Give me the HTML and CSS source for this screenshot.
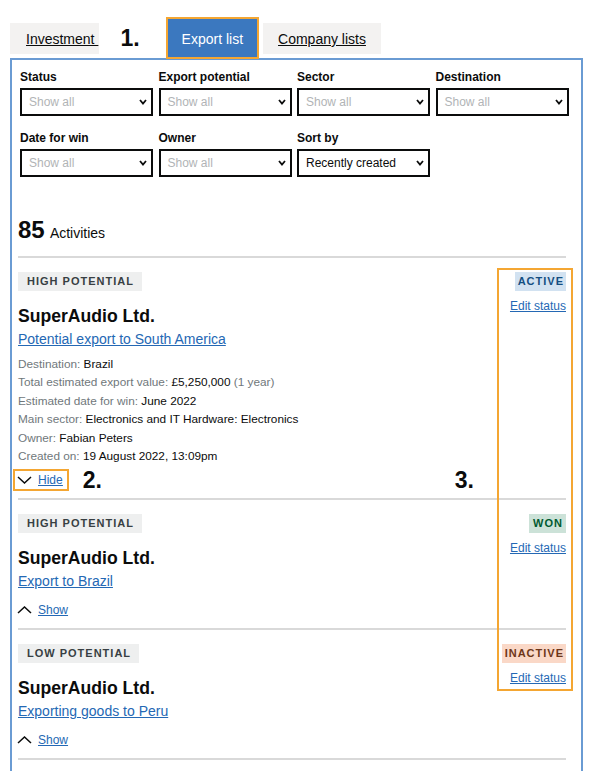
FILE: index.html
```html
<!DOCTYPE html>
<html lang="en">
<head>
<meta charset="utf-8">
<title>Export list</title>
<link rel="stylesheet" href="styles.css">
</head>
<body>
<nav class="tabs">
  <a class="tab tab-inactive tab-investment" href="#">Investment&nbsp;</a>
  <span class="annot-num annot-1">1.</span>
  <a class="tab tab-active" href="#">Export list</a>
  <a class="tab tab-inactive tab-company" href="#">Company lists</a>
</nav>
<main class="panel">
  <div class="filters">
    <div class="field">
      <span class="field-label">Status</span>
      <div class="select placeholder"><span>Show all</span><svg class="select-chev" width="8" height="6" viewBox="0 0 8 6"><polyline points="1,1 4,4.5 7,1" fill="none" stroke="#0b0c0c" stroke-width="1.8"/></svg></div>
    </div>
    <div class="field">
      <span class="field-label">Export potential</span>
      <div class="select placeholder"><span>Show all</span><svg class="select-chev" width="8" height="6" viewBox="0 0 8 6"><polyline points="1,1 4,4.5 7,1" fill="none" stroke="#0b0c0c" stroke-width="1.8"/></svg></div>
    </div>
    <div class="field">
      <span class="field-label">Sector</span>
      <div class="select placeholder"><span>Show all</span><svg class="select-chev" width="8" height="6" viewBox="0 0 8 6"><polyline points="1,1 4,4.5 7,1" fill="none" stroke="#0b0c0c" stroke-width="1.8"/></svg></div>
    </div>
    <div class="field">
      <span class="field-label">Destination</span>
      <div class="select placeholder"><span>Show all</span><svg class="select-chev" width="8" height="6" viewBox="0 0 8 6"><polyline points="1,1 4,4.5 7,1" fill="none" stroke="#0b0c0c" stroke-width="1.8"/></svg></div>
    </div>
    <div class="field">
      <span class="field-label">Date for win</span>
      <div class="select placeholder"><span>Show all</span><svg class="select-chev" width="8" height="6" viewBox="0 0 8 6"><polyline points="1,1 4,4.5 7,1" fill="none" stroke="#0b0c0c" stroke-width="1.8"/></svg></div>
    </div>
    <div class="field">
      <span class="field-label">Owner</span>
      <div class="select placeholder"><span>Show all</span><svg class="select-chev" width="8" height="6" viewBox="0 0 8 6"><polyline points="1,1 4,4.5 7,1" fill="none" stroke="#0b0c0c" stroke-width="1.8"/></svg></div>
    </div>
    <div class="field">
      <span class="field-label">Sort by</span>
      <div class="select"><span>Recently created</span><svg class="select-chev" width="8" height="6" viewBox="0 0 8 6"><polyline points="1,1 4,4.5 7,1" fill="none" stroke="#0b0c0c" stroke-width="1.8"/></svg></div>
    </div>
  </div>

  <p class="count"><span class="count-num">85</span> <span class="count-label">Activities</span></p>

  <ul class="cards">
    <li class="card">
      <div class="card-main">
        <span class="tag tag-potential">High potential</span>
        <h2 class="card-title">SuperAudio Ltd.</h2>
        <a class="card-link" href="#">Potential export to South America</a>
        <div class="details">
          <p class="detail"><span class="detail-label">Destination:</span> Brazil</p>
          <p class="detail"><span class="detail-label">Total estimated export value:</span> £5,250,000 <span class="detail-label">(1 year)</span></p>
          <p class="detail"><span class="detail-label">Estimated date for win:</span> June 2022</p>
          <p class="detail"><span class="detail-label">Main sector:</span> Electronics and IT Hardware: Electronics</p>
          <p class="detail"><span class="detail-label">Owner:</span> Fabian Peters</p>
          <p class="detail"><span class="detail-label">Created on:</span> 19 August 2022, 13:09pm</p>
        </div>
        <div class="toggle-row">
          <span class="annot-box"><a class="toggle" href="#"><svg class="chev" width="15" height="8" viewBox="0 0 15 8"><polyline points="1,1 7.5,7 14,1" fill="none" stroke="#0b0c0c" stroke-width="1.5"/></svg><span class="toggle-text">Hide</span></a></span>
          <span class="annot-num annot-2">2.</span>
          <span class="annot-num annot-3">3.</span>
        </div>
      </div>
      <div class="card-status">
        <span class="tag tag-active">Active</span>
        <a class="edit-link" href="#">Edit status</a>
      </div>
    </li>

    <li class="card">
      <div class="card-main">
        <span class="tag tag-potential">High potential</span>
        <h2 class="card-title">SuperAudio Ltd.</h2>
        <a class="card-link" href="#">Export to Brazil</a>
        <div class="toggle-row">
          <a class="toggle" href="#"><svg class="chev" width="15" height="8" viewBox="0 0 15 8"><polyline points="1,7 7.5,1 14,7" fill="none" stroke="#0b0c0c" stroke-width="1.5"/></svg><span class="toggle-text">Show</span></a>
        </div>
      </div>
      <div class="card-status">
        <span class="tag tag-won">Won</span>
        <a class="edit-link" href="#">Edit status</a>
      </div>
    </li>

    <li class="card">
      <div class="card-main">
        <span class="tag tag-potential">Low potential</span>
        <h2 class="card-title">SuperAudio Ltd.</h2>
        <a class="card-link" href="#">Exporting goods to Peru</a>
        <div class="toggle-row">
          <a class="toggle" href="#"><svg class="chev" width="15" height="8" viewBox="0 0 15 8"><polyline points="1,7 7.5,1 14,7" fill="none" stroke="#0b0c0c" stroke-width="1.5"/></svg><span class="toggle-text">Show</span></a>
        </div>
      </div>
      <div class="card-status">
        <span class="tag tag-inactive">Inactive</span>
        <a class="edit-link" href="#">Edit status</a>
      </div>
    </li>
  </ul>

  <div class="annot-status-box" aria-hidden="true"></div>
</main>
</body>
</html>
```

FILE: styles.css
```css
* {
  box-sizing: border-box;
}

body {
  margin: 0;
  font-family: "Liberation Sans", Arial, Helvetica, sans-serif;
  color: #0b0c0c;
  background: #ffffff;
}

/* Tabs */
.tabs {
  display: flex;
  align-items: flex-start;
  padding: 19px 0 0 10px;
}

.tab {
  display: block;
  font-size: 14px;
  line-height: 20px;
  color: #0b0c0c;
  text-decoration: underline;
  text-underline-offset: 1px;
}

.tab-inactive {
  margin-top: 4px;
  padding: 6px 15px 5px;
  background: #f3f2f1;
}

.tab-investment {
  padding: 6px 1px 5px 16px;
}

.tab-company {
  margin-left: 6px;
}

.tab-active {
  position: relative;
  z-index: 1;
  padding: 10px 14px 8px;
  background: #3b78bf;
  color: #ffffff;
  text-decoration: none;
  outline: 2px solid #f4a632;
}

.annot-num {
  font-size: 23px;
  line-height: 23px;
  font-weight: 700;
  color: #0b0c0c;
}

.annot-1 {
  margin: 7.5px 28px 0 21px;
}

/* Panel */
.panel {
  position: relative;
  margin: 1px 10px 0;
  border: 2px solid #6a9bd3;
  padding: 9.5px 15px 60px 6px;
}

.filters {
  display: grid;
  grid-template-columns: repeat(4, 133px);
  column-gap: 5.5px;
  row-gap: 14.5px;
  margin-left: 2px;
}

.field-label {
  display: block;
  font-size: 12px;
  line-height: 14px;
  font-weight: 700;
  margin-bottom: 4.5px;
}

.select {
  display: flex;
  align-items: center;
  justify-content: space-between;
  height: 28px;
  border: 2px solid #0b0c0c;
  padding: 0 4px 0 7px;
  font-size: 12px;
  line-height: 14px;
  color: #0b0c0c;
  background: #ffffff;
}

.select.placeholder {
  color: #b1b4b6;
}

.select-chev {
  flex: none;
}

/* Count */
.count {
  margin: 38.7px 0 0;
  padding-bottom: 8.85px;
  border-bottom: 2px solid #d9d9d9;
  font-size: 24px;
  line-height: 28px;
  font-weight: 700;
}

.count-label {
  margin-left: -1.5px;
  font-size: 14px;
  font-weight: 400;
}

/* Cards */
.cards {
  list-style: none;
  margin: 0;
  padding: 0;
}

.card {
  display: flex;
  justify-content: space-between;
  padding: 14px 0 9px;
  border-bottom: 2px solid #d9d9d9;
}

.card-main {
  flex: 1;
  display: flex;
  flex-direction: column;
  align-items: flex-start;
}

.card-status {
  display: flex;
  flex-direction: column;
  align-items: flex-end;
}

.tag {
  display: inline-block;
  height: 19px;
  font-size: 11px;
  line-height: 19px;
  font-weight: 700;
  letter-spacing: 1px;
  text-transform: uppercase;
}

.tag-potential {
  padding: 0 8px 0 9px;
  background: #eeefef;
  color: #383f43;
}

.tag-active {
  padding: 0 2px 0 3px;
  background: #d2e2f1;
  color: #144e81;
}

.tag-won {
  padding: 0 3px 0 4px;
  background: #cce2d8;
  color: #005a30;
}

.tag-inactive {
  padding: 0 2px 0 3px;
  background: #fad8c7;
  color: #6e3619;
}

.card-title {
  margin: 15px 0 0;
  font-size: 17.6px;
  line-height: 20px;
  font-weight: 700;
}

.card-link {
  margin-top: 3px;
  font-size: 14px;
  line-height: 20px;
  color: #2468b4;
  text-decoration: underline;
}

.details {
  margin-top: 6px;
}

.detail {
  margin: 0;
  font-size: 11.8px;
  line-height: 18.5px;
  color: #0b0c0c;
}

.detail-label {
  color: #6f777b;
}

.toggle-row {
  align-self: stretch;
  display: flex;
  align-items: center;
  height: 18px;
  margin-top: 10px;
}

.details + .toggle-row {
  margin-top: 5px;
}

.toggle {
  display: inline-flex;
  align-items: center;
  gap: 6px;
  font-size: 12px;
  line-height: 18px;
  color: #2468b4;
}

.toggle-text {
  text-decoration: underline;
}

.chev {
  flex: none;
  margin-left: -1px;
}

.annot-box {
  display: inline-flex;
  align-items: center;
  height: 18px;
  padding: 0 4px 0 3px;
  margin: 0 -4px 0 -3px;
  outline: 2px solid #f4a632;
}

.annot-2 {
  margin-left: 20px;
  line-height: 18px;
}

.annot-3 {
  margin-left: auto;
  margin-right: 36px;
  line-height: 18px;
}

.edit-link {
  margin-top: 7px;
  font-size: 12px;
  line-height: 16px;
  color: #2468b4;
  text-decoration: underline;
}

/* Annotation overlay around the status column */
.annot-status-box {
  position: absolute;
  left: 484.5px;
  top: 207.5px;
  width: 76px;
  height: 423.5px;
  border: 2px solid #f4a632;
  pointer-events: none;
}
```
